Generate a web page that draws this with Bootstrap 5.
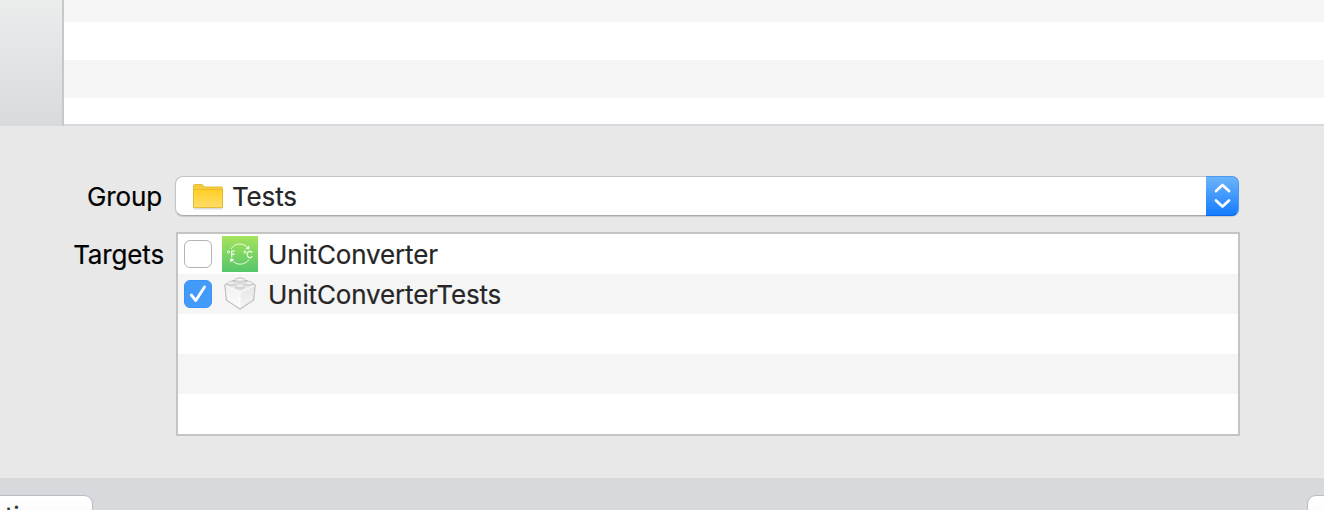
<!DOCTYPE html>
<html lang="en">
<head>
<meta charset="utf-8">
<title>New file</title>
<link href="https://cdn.jsdelivr.net/npm/bootstrap@5.3.0/dist/css/bootstrap.min.css" rel="stylesheet">
<style>
body{font-family:Inter,"Liberation Sans",sans-serif;font-size:26px;line-height:40px;letter-spacing:-.15px;color:#262626;background:#e8e8e8;-webkit-text-stroke:.2px}
.sheet{height:510px}
.browser{height:126px}
.sidebar{width:64px;background:linear-gradient(#ebecec,#e3e4e6 45%,#d8dade);border-right:2px solid #c7c8cb}
.file-list{border-bottom:2px solid #d8d9de;background:linear-gradient(#f5f5f5 22px,#fff 22px 60px,#f5f5f5 60px 98px,#fff 98px)}
.options{height:352px;padding:50px 84px 0 0}
.field-label{width:164px;height:40px;color:#000;text-align:right}
.group-label{padding:1px 2px 0 0}
.targets-label{padding-top:3px}
.popup{width:1064px;height:40px;margin-left:11px;background:#fff;border:1px solid #c3c3c3;border-bottom:1px solid #aaa;border-radius:8px;padding-left:16px;box-shadow:0 1px 1px #0002}
.group-name{margin-left:8px;padding-top:2px}
.stepper{width:33px;height:40px;margin:-1px -1px -1px auto;border-radius:0 7px 7px 0;background:linear-gradient(#6cb4fa,#157cfd);border:1px solid #4c9bf3;border-left:0;border-bottom-color:#0d66e8}
.targets{width:1064px;height:204px;margin-left:12px;border:2px solid #c4c4c4;background:#fff}
.target{height:40px;padding-left:6px}
.target:nth-child(even){background:#f5f5f5}
.target-name{margin-left:10px;padding-top:2px}
.tick{width:28px;height:28px;margin:0 10px 0 0;border:1.5px solid #b4b4b4;border-radius:6px;background:#fff}
.tick.on{background:#429bf9;border-color:#3d93f3}
.footer{height:32px;padding-top:17px;background:#d8d9dd;overflow:hidden}
.push{height:40px;background:linear-gradient(#fff,#f7f7f7);border:1px solid #bcbdc2;line-height:41px;color:#333}
.push-left{width:93px;border-left:0;border-radius:0 9px 0 0;padding-left:5px}
.push-right{width:17px;border-right:0;border-radius:9px 0 0 0}
</style>
</head>
<body class="overflow-hidden">
<main class="sheet d-flex flex-column overflow-hidden">
  <section class="browser d-flex flex-shrink-0">
    <div class="sidebar flex-shrink-0"></div>
    <div class="file-list flex-grow-1"></div>
  </section>
  <section class="options flex-shrink-0">
    <div class="d-flex">
      <div class="field-label group-label flex-shrink-0">Group</div>
      <div class="popup d-flex align-items-center flex-shrink-0">
        <svg width="32" height="28" viewBox="0 0 32 28" class="flex-shrink-0">
          <defs><linearGradient id="fold" x2="0" y2="1"><stop stop-color="#ffcf22"/><stop offset="1" stop-color="#ffdd6b"/></linearGradient></defs>
          <path d="M1.500 26.500h29" stroke="#0002" stroke-width="2"/>
          <path d="M1.500 25V4Q1.500 2.500 3 2.500H9.500Q11 2.500 12 5H29.500Q30.500 5 30.500 6.500V25Z" fill="#f6cc3e" stroke="#e3ba38"/>
          <path d="M1.500 7.500H30.500V25.500H1.500Z" fill="url(#fold)" stroke="#e8bc32"/>
        </svg>
        <span class="group-name">Tests</span>
        <span class="stepper d-flex align-items-center justify-content-center">
          <svg width="18" height="28" viewBox="0 0 18 28" fill="none" stroke="#fff" stroke-width="2.700" stroke-linecap="round" stroke-linejoin="round"><path d="M3 9 9.500 3 16 9M3 18.500 9.500 24.500 16 18.500"/></svg>
        </span>
      </div>
    </div>
    <div class="d-flex mt-3">
      <div class="field-label targets-label flex-shrink-0">Targets</div>
      <div class="targets flex-shrink-0">
        <div class="target d-flex align-items-center">
          <span class="tick flex-shrink-0"></span>
          <svg width="36" height="36" viewBox="0 0 36 36" class="flex-shrink-0">
            <defs><linearGradient id="leaf" x2="0" y2="1"><stop stop-color="#a5e35c"/><stop offset="1" stop-color="#56c66b"/></linearGradient></defs>
            <path d="M0 0h36v36H0z" fill="url(#leaf)"/>
            <g fill="none" stroke="#f4ffee" stroke-width=".9"><path d="M9 13A10.300 10.300 0 0 1 26 12M27 23.500A10.500 10.500 0 0 1 9.500 23.500"/><circle cx="6.500" cy="16" r="1.100"/><circle cx="23" cy="16" r="1.100"/><path d="M9.700 21.500v-6.500h3.300M9.700 18.200h3M30.200 16.800A2.700 3.200 0 1 0 30.200 20.200" stroke-width="1.200"/></g>
            <path d="M27.300 9.500v4l-4-.8zM8.300 26.500v-4l4 .8z" fill="#f4ffee"/>
          </svg>
          <span class="target-name">UnitConverter</span>
        </div>
        <div class="target d-flex align-items-center">
          <span class="tick on d-flex flex-shrink-0"><svg width="25" height="25" viewBox="0 0 25 25" fill="none" stroke="#fff" stroke-width="2.800" stroke-linecap="round" stroke-linejoin="round"><path d="M6.300 14 10.800 19.500 19.500 6"/></svg></span>
          <svg width="36" height="36" viewBox="0 0 36 36" class="flex-shrink-0" stroke-linejoin="round">
            <defs><linearGradient id="brickLeft" x2="0" y2="1"><stop stop-color="#f0f0f0"/><stop offset="1" stop-color="#fcfcfc"/></linearGradient><linearGradient id="brickRight" x2="0" y2="1"><stop stop-color="#e6e6e6"/><stop offset="1" stop-color="#f4f4f4"/></linearGradient></defs>
            <path d="M3 9 7 6.500 14 4V3Q18 1.500 22 3V4L29 6.500 33 9 31.500 24 18 33 4.500 24Z" fill="#ebebeb" stroke="#bcbcbc" stroke-width="1.400"/>
            <path d="M3.500 9.500 18 16.500V32.300L5 23.700Z" fill="url(#brickLeft)"/>
            <path d="M32.500 9.500 18 16.500V32.300L31 23.700Z" fill="url(#brickRight)"/>
            <path d="M3.800 9.700 18 16.500 32.200 9.700M18 16.500V32" fill="none" stroke="#fff" stroke-width=".9"/>
            <g fill="#dedede" stroke="#cbcbcb" stroke-width=".8"><path d="M13.500 3.500v2.300q4.500 2.500 9 0V3.500M5.500 7v2q4 2.500 8 0V7M22.500 7v2q4 2.500 8 0V7M13.500 9.700v2.300q4.500 2.500 9 0V9.700"/></g>
            <g fill="#f3f3f3" stroke="#cbcbcb" stroke-width=".8"><ellipse cx="18" cy="3.700" rx="4.500" ry="1.600"/><ellipse cx="9.500" cy="7" rx="4" ry="1.500"/><ellipse cx="26.500" cy="7" rx="4" ry="1.500"/><ellipse cx="18" cy="9.700" rx="4.500" ry="1.600"/></g>
          </svg>
          <span class="target-name">UnitConverterTests</span>
        </div>
        <div class="target"></div>
        <div class="target"></div>
        <div class="target"></div>
      </div>
    </div>
  </section>
  <footer class="footer d-flex justify-content-between flex-shrink-0">
    <div class="push push-left">ti</div>
    <div class="push push-right"></div>
  </footer>
</main>
<script src="https://cdn.jsdelivr.net/npm/bootstrap@5.3.0/dist/js/bootstrap.bundle.min.js"></script>
</body>
</html>
